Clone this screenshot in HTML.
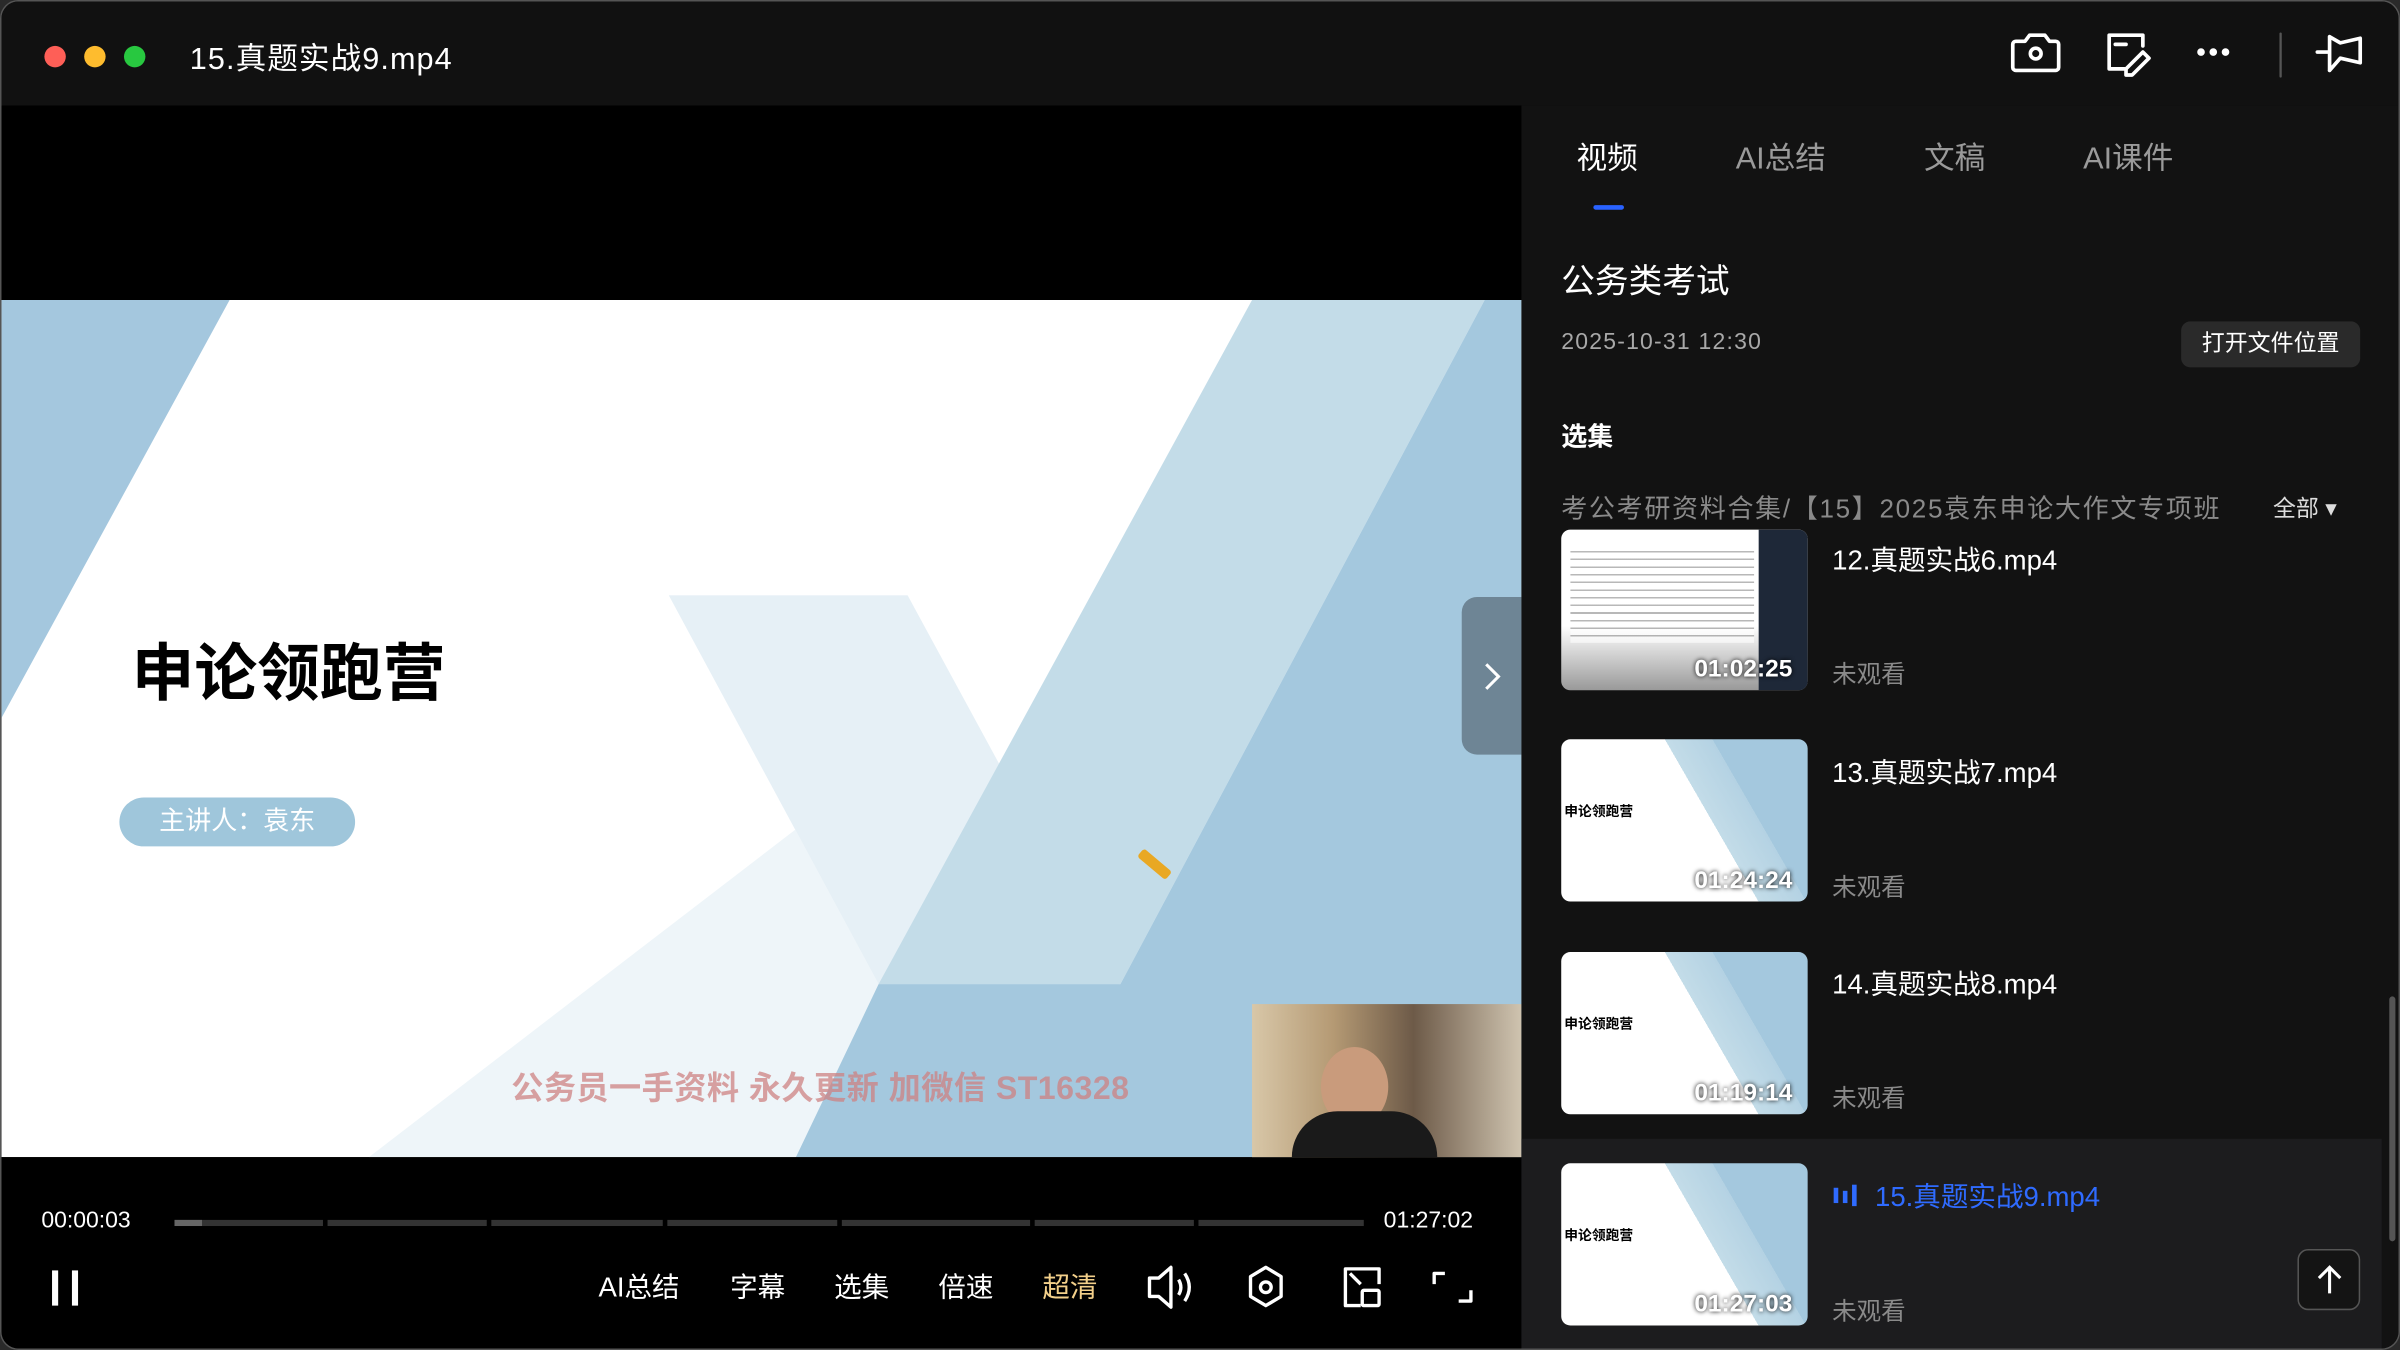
<!DOCTYPE html>
<html><head><meta charset="utf-8"><style>
*{margin:0;padding:0;box-sizing:border-box}
html,body{width:2400px;height:1350px;overflow:hidden;background:#2a2a2a}
#w{position:absolute;left:0;top:0;width:1568px;height:882px;transform:scale(1.530612);transform-origin:0 0;background:#000;border-radius:12px;overflow:hidden;font-family:"Liberation Sans","Noto Sans CJK SC",sans-serif;color:#fff;border:1px solid #555}
.a{position:absolute}
.tl{width:14px;height:14px;border-radius:50%;top:29px}
.tab{top:86px;font-size:20px;color:#9a9a9a}
.it{position:absolute;left:1019px;width:161px;height:106px;border-radius:6px;overflow:hidden;background:#fff}
.ti{position:absolute;left:1196px;font-size:18px;color:#fff}
.un{position:absolute;left:1196px;font-size:16px;color:#8a8a8a}
.dur{position:absolute;right:10px;bottom:4px;font-size:16px;font-weight:bold;color:#fff;text-shadow:0 0 3px #000}
.ctl{top:826px;font-size:18px;color:#fff}
.th{background:linear-gradient(60deg,#fff 58%,#c3dce8 58%,#b4d2e3 72%,#a4c8de 72%)}
</style></head><body><div id="w">
<div class="a" style="left:0;top:0;width:1568px;height:68px;background:#111"></div>
<div class="a tl" style="left:28px;background:#fe5f57"></div>
<div class="a tl" style="left:54px;background:#febc2e"></div>
<div class="a tl" style="left:80px;background:#28c840"></div>
<div class="a" style="left:123px;top:21px;font-size:20px;letter-spacing:.7px">15.真题实战9.mp4</div>
<svg class="a" style="left:1310px;top:17px" width="240" height="34" viewBox="0 0 240 34" fill="none" stroke="#fff" stroke-width="2.4" stroke-linejoin="round" stroke-linecap="round">
<path d="M6 9h6l3-4h10l3 4h4a2 2 0 0 1 2 2v15a2 2 0 0 1-2 2H6a2 2 0 0 1-2-2V11a2 2 0 0 1 2-2z"/><circle cx="19" cy="17" r="3.5"/>
<path d="M77 27h-10V5h22v7"/><path d="M71 11h7"/><path d="M78 27l11-11 4 4-11 11h-4z"/>
<circle cx="127" cy="16" r="1.3" fill="#fff"/><circle cx="135" cy="16" r="1.3" fill="#fff"/><circle cx="143" cy="16" r="1.3" fill="#fff"/>
<path d="M179 4v28" stroke="#555" stroke-width="1.5"/>
<path d="M203 16h8M211 6v22M211 6l7 4 13-3v16l-13-3-7 8"/>
</svg>
<div class="a" style="left:0;top:68px;width:993px;height:814px;background:#000"></div>
<svg class="a" style="left:0;top:195px" width="993" height="560" viewBox="0 195 993 560">
<rect x="0" y="195" width="993" height="560" fill="#fff"/>
<polygon points="0,195 149,195 0,468" fill="#a4c7de"/>
<polygon points="436,388 592,388 520,540 240,755 519,755 573,642" fill="#eef5f9"/>
<polygon points="436,388 592,388 730,642 573,642" fill="#e6f0f6"/>
<polygon points="817,195 969,195 731,642 573,642" fill="#c3dce8"/>
<polygon points="969,195 993,195 993,755 519,755 573,642 731,642" fill="#a4c8de"/>
<rect x="741" y="560" width="24" height="7" rx="2" fill="#e9a823" transform="rotate(40 753 564)"/>
</svg>
<div class="a" style="left:85px;top:405px;font-size:41px;font-weight:bold;color:#000">申论领跑营</div>
<div class="a" style="left:77px;top:520px;width:154px;height:32px;border-radius:16px;background:#9fc6db;color:#fff;font-size:17px;line-height:32px;text-align:center">主讲人：袁东</div>
<div class="a" style="left:333px;top:694px;font-size:21px;font-weight:bold;color:rgba(205,130,130,.75);letter-spacing:.3px">公务员一手资料 永久更新 加微信 ST16328</div>
<div class="a" style="left:817px;top:655px;width:176px;height:100px;background:linear-gradient(90deg,#d8c7a8,#b59a74 30%,#6d5a48 60%,#cfc4b0)"></div>
<div class="a" style="left:862px;top:683px;width:44px;height:52px;border-radius:50%;background:#c99b7c"></div>
<div class="a" style="left:843px;top:725px;width:95px;height:30px;border-radius:30px 30px 0 0;background:#1a1a1a"></div>
<div class="a" style="left:954px;top:389px;width:39px;height:103px;border-radius:10px 0 0 10px;background:#6e8595"></div>
<svg class="a" style="left:966px;top:430px" width="16" height="22"><path d="M4 3l8 8-8 8" stroke="#fff" stroke-width="2" fill="none"/></svg>
<div class="a" style="left:26px;top:788px;font-size:15px">00:00:03</div>
<div class="a" style="left:903px;top:788px;font-size:15px">01:27:02</div>
<div class="a" style="left:113px;top:796px;width:777px;height:4px;display:flex;gap:3px">
<div style="width:97px;background:#333;position:relative"><div style="width:18px;height:4px;background:#666"></div></div><div style="width:104px;background:#333"></div><div style="width:112px;background:#333"></div><div style="width:111px;background:#333"></div><div style="width:123px;background:#333"></div><div style="width:104px;background:#333"></div><div style="width:108px;background:#333"></div>
</div>
<div class="a" style="left:33px;top:829px;width:4px;height:23px;background:#fff"></div>
<div class="a" style="left:46px;top:829px;width:4px;height:23px;background:#fff"></div>
<div class="a ctl" style="left:390px">AI总结</div>
<div class="a ctl" style="left:476px">字幕</div>
<div class="a ctl" style="left:544px">选集</div>
<div class="a ctl" style="left:612px">倍速</div>
<div class="a ctl" style="left:680px;color:#f3d08a">超清</div>
<svg class="a" style="left:745px;top:823px" width="220" height="34" fill="none" stroke="#fff" stroke-width="2.2" stroke-linejoin="round">
<path d="M5 11h6l8-7v26l-8-7H5z"/><path d="M24 12q3 5 0 10M28 8q6 9 0 18"/>
<path d="M81 4l10 6v13l-10 6-10-6V10z"/><circle cx="81" cy="17" r="3.5"/>
<path d="M143 29h-10V5h22v10"/><rect x="144" y="19" width="11" height="10" rx="1"/><path d="M136 8l7 7"/>
<path d="M198 8h-7v7M207 26h8v-7"/>
</svg>
<div class="a" style="left:993px;top:68px;width:575px;height:814px;background:#121212"></div>
<div class="a tab" style="left:1029px;color:#fff">视频</div>
<div class="a tab" style="left:1133px">AI总结</div>
<div class="a tab" style="left:1256px">文稿</div>
<div class="a tab" style="left:1360px">AI课件</div>
<div class="a" style="left:1040px;top:133px;width:20px;height:3px;background:#2962ff;border-radius:2px"></div>
<div class="a" style="left:1019px;top:165px;font-size:22px">公务类考试</div>
<div class="a" style="left:1019px;top:214px;font-size:15px;color:#a8a8a8;letter-spacing:.8px">2025-10-31 12:30</div>
<div class="a" style="left:1424px;top:209px;width:117px;height:30px;border-radius:6px;background:#2a2a2a;font-size:15px;line-height:30px;text-align:center">打开文件位置</div>
<div class="a" style="left:1019px;top:270px;font-size:17px;font-weight:bold">选集</div>
<div class="a" style="left:1019px;top:317px;font-size:17px;color:#8a8a8a;letter-spacing:1.1px;white-space:nowrap">考公考研资料合集/【15】2025袁东申论大作文专项班</div>
<div class="a" style="left:1484px;top:320px;font-size:15px;color:#ddd">全部 ▾</div>
<div class="a" style="left:993px;top:743px;width:562px;height:139px;background:#1c1c1e"></div>
<div class="it" style="top:345px;height:105px;background:linear-gradient(180deg,#fff 0,#fff 60%,#999 100%)"><div style="position:absolute;left:6px;top:14px;width:120px;height:60px;background:repeating-linear-gradient(180deg,#888 0 1px,#fff 1px 5px);opacity:.6"></div><div style="position:absolute;right:0;top:0;width:32px;height:105px;background:#1e2838"></div><div class="dur">01:02:25</div></div>
<div class="ti" style="top:351px">12.真题实战6.mp4</div><div class="un" style="top:426px">未观看</div>
<div class="it th" style="top:482px"><div style="position:absolute;left:2px;top:40px;font-size:9px;font-weight:bold;color:#000">申论领跑营</div><div class="dur">01:24:24</div></div>
<div class="ti" style="top:490px">13.真题实战7.mp4</div><div class="un" style="top:565px">未观看</div>
<div class="it th" style="top:621px"><div style="position:absolute;left:2px;top:40px;font-size:9px;font-weight:bold;color:#000">申论领跑营</div><div class="dur">01:19:14</div></div>
<div class="ti" style="top:628px">14.真题实战8.mp4</div><div class="un" style="top:703px">未观看</div>
<div class="it th" style="top:759px"><div style="position:absolute;left:2px;top:40px;font-size:9px;font-weight:bold;color:#000">申论领跑营</div><div class="dur">01:27:03</div></div>
<div class="a" style="left:1197px;top:775px;width:3px;height:10px;background:#2f6bff"></div>
<div class="a" style="left:1203px;top:777px;width:3px;height:8px;background:#2f6bff"></div>
<div class="a" style="left:1209px;top:773px;width:3px;height:14px;background:#2f6bff"></div>
<div class="ti" style="top:767px;left:1224px;color:#2f6bff">15.真题实战9.mp4</div><div class="un" style="top:842px">未观看</div>
<div class="a" style="left:1560px;top:650px;width:4px;height:160px;background:#555;border-radius:2px"></div>
<div class="a" style="left:1500px;top:815px;width:41px;height:40px;border:1px solid #555;border-radius:7px;background:#141414"></div>
<svg class="a" style="left:1510px;top:824px" width="22" height="22"><path d="M11 20V3M4 10l7-7 7 7" stroke="#fff" stroke-width="2" fill="none"/></svg>
</div></body></html>
